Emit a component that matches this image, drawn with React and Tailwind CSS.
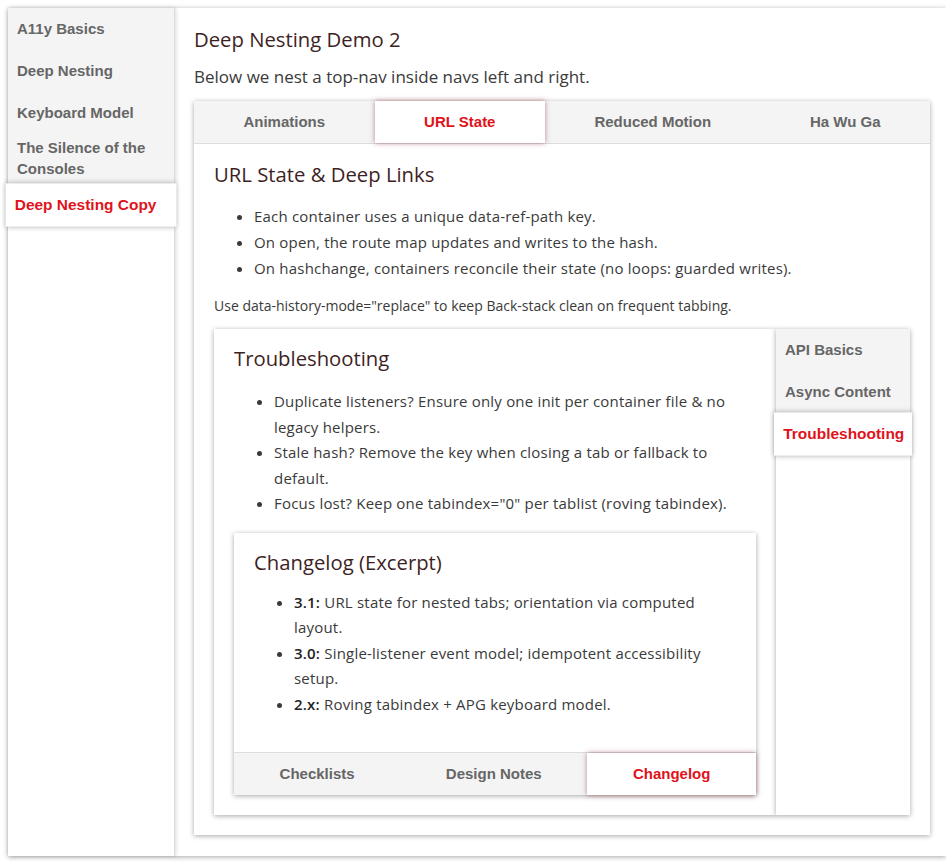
const sideItems = [
  { label: 'A11y Basics' },
  { label: 'Deep Nesting' },
  { label: 'Keyboard Model' },
  { label: 'The Silence of the Consoles', tall: true },
  { label: 'Deep Nesting Copy', active: true },
]

const topTabs = [
  { label: 'Animations' },
  { label: 'URL State', active: true },
  { label: 'Reduced Motion' },
  { label: 'Ha Wu Ga' },
]

const rightTabs = [
  { label: 'API Basics' },
  { label: 'Async Content' },
  { label: 'Troubleshooting', active: true },
]

const bottomTabs = [
  { label: 'Checklists' },
  { label: 'Design Notes' },
  { label: 'Changelog', active: true },
]

function HTab({ label, active, height }) {
  return (
    <button
      className={`flex-auto ${height} px-0 text-center font-['Liberation_Sans',Arial,sans-serif] text-[15px] font-bold ${
        active
          ? 'relative z-10 bg-white text-[#e0131b] shadow-[0_0_5px_rgba(120,20,30,0.5)]'
          : 'bg-[#f4f4f4] text-[#666666]'
      }`}
    >
      {label}
    </button>
  )
}

export default function App() {
  return (
    <div className="min-h-screen bg-white pl-2 pt-2 font-['Open_Sans',sans-serif] text-[#3a3a3a]">
      <div className="flex h-[848px] bg-white shadow-[0_1px_5px_rgba(0,0,0,0.35)]">
        {/* Sidebar */}
        <nav className="flex w-[167px] shrink-0 flex-col border-r border-[#dcdcdc] bg-white shadow-[1px_0_4px_rgba(0,0,0,0.15)] font-['Liberation_Sans',Arial,sans-serif] text-[15px] font-bold">
          {sideItems.map(item => (
            <div
              key={item.label}
              className={
                item.active
                  ? 'relative z-10 flex h-[42px] scale-[1.03] items-center bg-white px-[9px] text-[#e0131b] shadow-[0_0_5px_rgba(0,0,0,0.3)]'
                  : item.tall
                    ? 'h-[50px] bg-[#f4f4f4] px-[9px] pt-[3px] leading-[21px] text-[#666666]'
                    : 'flex h-[42px] items-center bg-[#f4f4f4] px-[9px] text-[#666666]'
              }
            >
              {item.tall ? (
                <span>
                  The Silence of the
                  <br />
                  Consoles
                </span>
              ) : (
                item.label
              )}
            </div>
          ))}
        </nav>

        {/* Main */}
        <main className="flex-1 pl-[19px] pr-[16px] pt-[19px]">
          <h1 className="text-[20.3px] leading-[24px] text-[#3e1f24]">Deep Nesting Demo 2</h1>
          <p className="mt-[14px] text-[17px] leading-[24px]">Below we nest a top-nav inside navs left and right.</p>

          <div className="mt-[12px] bg-white shadow-[0_1px_5px_rgba(0,0,0,0.35)]">
            <div className="flex border-b border-[#dddddd] bg-[#f4f4f4]">
              {topTabs.map(t => (
                <HTab key={t.label} label={t.label} active={t.active} height="h-[42px]" />
              ))}
            </div>

            <div className="px-[20px] pb-[20px] pt-[17px]">
              <h2 className="text-[20.3px] leading-[26px] text-[#3e1f24]">URL State &amp; Deep Links</h2>
              <ul className="mt-[16px] list-disc pl-[40px] text-[15px] leading-[26px] tracking-[0.2px]">
                <li>Each container uses a unique data-ref-path key.</li>
                <li>On open, the route map updates and writes to the hash.</li>
                <li>On hashchange, containers reconcile their state (no loops: guarded writes).</li>
              </ul>
              <p className="mt-[15px] text-[14px] leading-[20px]">
                Use data-history-mode="replace" to keep Back-stack clean on frequent tabbing.
              </p>

              {/* Nested vertical tabs */}
              <div className="mt-[13px] flex">
                <div className="flex-1 bg-white px-[20px] pb-[20px] pt-[16px] shadow-[0_1px_5px_rgba(0,0,0,0.35)]">
                  <h3 className="text-[20.3px] leading-[26px] text-[#3e1f24]">Troubleshooting</h3>
                  <ul className="mt-[18px] list-disc pl-[40px] text-[15px] leading-[25.5px] tracking-[0.2px]">
                    <li>Duplicate listeners? Ensure only one init per container file &amp; no legacy helpers.</li>
                    <li>Stale hash? Remove the key when closing a tab or fallback to default.</li>
                    <li>Focus lost? Keep one tabindex="0" per tablist (roving tabindex).</li>
                  </ul>

                  <div className="mt-[16px] bg-white shadow-[0_1px_5px_rgba(0,0,0,0.35)]">
                    <div className="px-[20px] pb-[35px] pt-[16px]">
                      <h4 className="text-[20.3px] leading-[26px] text-[#3e1f24]">Changelog (Excerpt)</h4>
                      <ul className="mt-[15px] list-disc pl-[40px] text-[15px] leading-[25.5px] tracking-[0.2px]">
                        <li>
                          <strong className="font-semibold text-[#222]">3.1: </strong>URL state for nested tabs; orientation via computed layout.
                        </li>
                        <li>
                          <strong className="font-semibold text-[#222]">3.0: </strong>Single-listener event model; idempotent accessibility setup.
                        </li>
                        <li>
                          <strong className="font-semibold text-[#222]">2.x: </strong>Roving tabindex + APG keyboard model.
                        </li>
                      </ul>
                    </div>
                    <div className="flex border-t border-[#dddddd] bg-[#f4f4f4]">
                      {bottomTabs.map(t => (
                        <HTab key={t.label} label={t.label} active={t.active} height="h-[42px]" />
                      ))}
                    </div>
                  </div>
                </div>

                <div className="flex w-[134px] shrink-0 flex-col bg-white shadow-[0_1px_5px_rgba(0,0,0,0.35)] font-['Liberation_Sans',Arial,sans-serif] text-[15px] font-bold">
                  {rightTabs.map(t => (
                    <div
                      key={t.label}
                      className={
                        t.active
                          ? 'relative z-10 flex h-[42px] scale-[1.03] items-center bg-white px-[9px] text-[#e0131b] shadow-[0_0_5px_rgba(0,0,0,0.3)]'
                          : 'flex h-[42px] items-center bg-[#f4f4f4] px-[9px] text-[#666666]'
                      }
                    >
                      {t.label}
                    </div>
                  ))}
                </div>
              </div>
            </div>
          </div>
        </main>
      </div>
    </div>
  )
}
